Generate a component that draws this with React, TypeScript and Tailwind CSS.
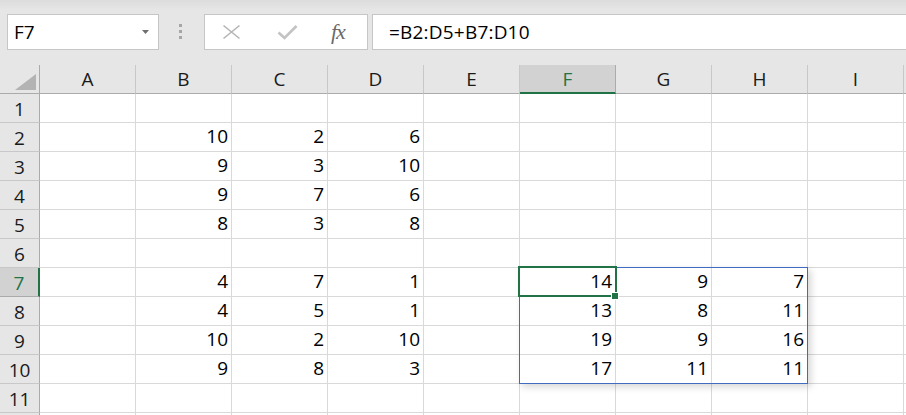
import React from "react";

const cols = ["A", "B", "C", "D", "E", "F", "G", "H", "I", "J"];
const data: Record<number, Record<string, number>> = {
  2: { B: 10, C: 2, D: 6 },
  3: { B: 9, C: 3, D: 10 },
  4: { B: 9, C: 7, D: 6 },
  5: { B: 8, C: 3, D: 8 },
  7: { B: 4, C: 7, D: 1, F: 14, G: 9, H: 7 },
  8: { B: 4, C: 5, D: 1, F: 13, G: 8, H: 11 },
  9: { B: 10, C: 2, D: 10, F: 19, G: 9, H: 16 },
  10: { B: 9, C: 8, D: 3, F: 17, G: 11, H: 11 },
};

export default function App() {
  const rows = Array.from({ length: 12 }, (_, i) => i + 1);
  return (
    <div className="w-[906px] h-[415px] overflow-hidden bg-white font-['Open_Sans',sans-serif] text-[19px] text-black">
      {/* Toolbar */}
      <div className="relative h-[65px] bg-[#e6e6e6] flex items-start pt-[14px]">
        <div className="absolute left-0 right-0 top-0 h-[10px] bg-gradient-to-b from-[#dcdcdc] to-[#e6e6e6]" />
        <div className="relative ml-[7px] w-[152px] h-[36px] bg-white border border-[#c6c6c6] flex items-center pl-[6px] pr-[9px]">
          <span className="flex-1 leading-[20px]">F7</span>
          <svg width="7" height="4" viewBox="0 0 7 4">
            <polygon points="0,0 7,0 3.5,4" fill="#6f6f6f" />
          </svg>
        </div>
        <div className="relative ml-[20px] mt-[10px] flex flex-col gap-[3px]">
          <div className="w-[3px] h-[3px] bg-[#a6a6a6]" />
          <div className="w-[3px] h-[3px] bg-[#a6a6a6]" />
          <div className="w-[3px] h-[3px] bg-[#a6a6a6]" />
        </div>
        <div className="relative ml-[22px] w-[164px] h-[36px] bg-white border border-[#c6c6c6] flex items-center pl-[17px]">
          <svg width="19" height="16" viewBox="0 0 19 16">
            <path d="M1.5 1.5 L17.5 14.5 M17.5 1.5 L1.5 14.5" stroke="#b4b4b4" strokeWidth="1.6" fill="none" />
          </svg>
          <svg className="ml-[36px]" width="21" height="16" viewBox="0 0 21 16">
            <path d="M1.5 8.5 L7.5 14 L19.5 2" stroke="#c3c3c3" strokeWidth="2.6" fill="none" />
          </svg>
          <span className="ml-[33px] font-['Liberation_Serif',serif] italic text-[22px] leading-[20px] text-[#6a6a6a] tracking-[-1px]">fx</span>
        </div>
        <div className="relative ml-[4px] flex-1 h-[36px] bg-white border-y border-l border-[#c6c6c6] flex items-center pl-[16px]">
          <span className="leading-[20px] tracking-[0.2px]">=B2:D5+B7:D10</span>
        </div>
      </div>

      {/* Grid */}
      <div className="relative grid grid-cols-[40px_repeat(10,96px)] auto-rows-[29px]">
        {/* header row */}
        <div className="bg-[#e6e6e6] border-r border-b border-[#ababab] relative">
          <svg className="absolute left-[15px] top-[9px]" width="22" height="17" viewBox="0 0 22 17">
            <polygon points="21,0 21,16 0,16" fill="#b3b3b3" />
          </svg>
        </div>
        {cols.map((c) =>
          c === "F" ? (
            <div
              key={c}
              className="bg-[#d2d2d2] border-r border-[#ababab] border-b-2 border-b-[#217346] flex items-center justify-center leading-[20px] text-[#217346]"
            >
              {c}
            </div>
          ) : (
            <div
              key={c}
              className="bg-[#e6e6e6] border-r border-r-[#c8c8c8] border-b border-b-[#ababab] flex items-center justify-center leading-[20px] text-[#1a1a1a]"
            >
              {c === "J" ? "" : c}
            </div>
          )
        )}
        {rows.map((r) => (
          <React.Fragment key={r}>
            {r === 7 ? (
              <div className="bg-[#d2d2d2] border-r-2 border-r-[#217346] border-b border-b-[#ababab] flex items-center justify-center pt-[2px] leading-[20px] text-[#217346]">
                {r}
              </div>
            ) : (
              <div className="bg-[#e6e6e6] border-r border-r-[#ababab] border-b border-b-[#c8c8c8] flex items-center justify-center pt-[2px] leading-[20px] text-[#1a1a1a]">
                {r === 12 ? "" : r}
              </div>
            )}
            {cols.map((c) => (
              <div
                key={c}
                className="border-r border-b border-[#d9d9d9] flex justify-end pr-[3px] pt-[3px] leading-[20px]"
              >
                {data[r]?.[c] ?? ""}
              </div>
            ))}
          </React.Fragment>
        ))}

        {/* spill range border */}
        <div className="absolute left-[519px] top-[202px] w-[289px] h-[117px] border border-[#3f6cc0] shadow-[3px_3px_7px_rgba(0,0,0,0.16)] pointer-events-none" />
        {/* selection */}
        <div className="absolute left-[518px] top-[201px] w-[99px] h-[31px] border-2 border-[#217346] pointer-events-none" />
        <div className="absolute left-[611px] top-[227px] w-[8px] h-[8px] bg-[#217346] border border-white pointer-events-none" />
      </div>
    </div>
  );
}
